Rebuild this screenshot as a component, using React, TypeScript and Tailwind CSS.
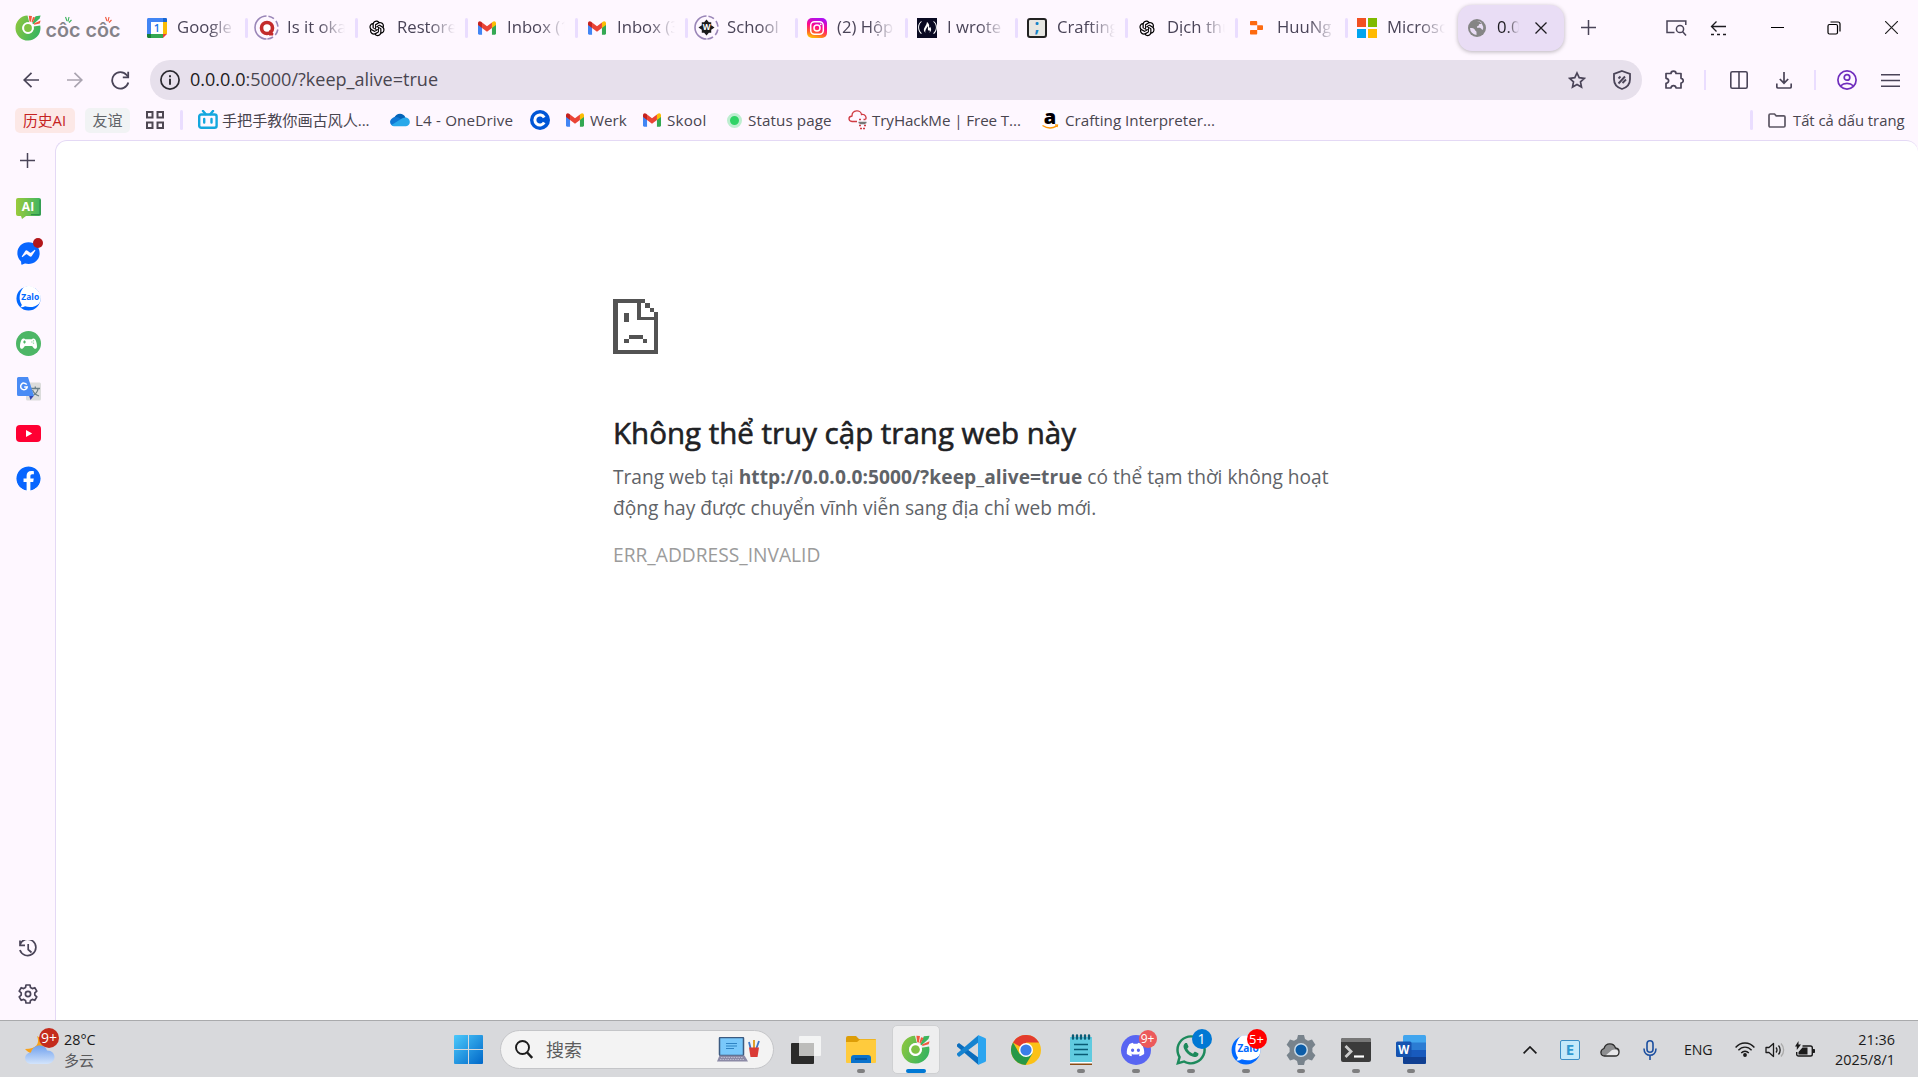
import React from "react";
import { AiOutlineOpenAI } from "react-icons/ai";
import { FaDiscord, FaWhatsapp, FaFacebook, FaFacebookMessenger, FaFreeCodeCamp } from "react-icons/fa";

function CocCocMark({ className }: { className: string }) {
  return (
    <svg viewBox="0 0 26 26" className={className}>
      <defs>
        <linearGradient id="ccg" x1="0" y1="0" x2="1" y2="0.4">
          <stop offset="0" stopColor="#94c83d" />
          <stop offset="1" stopColor="#3bb55d" />
        </linearGradient>
      </defs>
      <path d="M12.500.600A12.500 12.500 0 1 0 25.500 13c0-.9-.1-1.800-.3-2.600L18.500 11.500a5.700 5.700 0 1 1-4.200-4Z" fill="url(#ccg)" />
      <circle cx="13" cy="13" r="5.800" fill="#fff" />
      <circle cx="13" cy="13" r="3.900" fill="#7fc244" />
      <path d="M20.500 1.200 25.600.600 24.600 3.500 18.400 9.200 17.300 8.200Z" fill="#3bb55d" />
      <path d="M13.800.700l3.200.200-1 5.900-1.500-.2ZM18 2l2.300.6-2.800 5-1-.6ZM25.600 5.500l-.8 2.900-5.600 1.400-.4-1.200Z" fill="#f0593e" />
    </svg>
  );
}

function Gmail({ className }: { className: string }) {
  return (
    <svg viewBox="0 0 24 18" className={className}>
      <path d="M0 3v13.400C0 17.300.700 18 1.600 18h3.800V7Z" fill="#4285f4" />
      <path d="M24 3v13.400c0 .9-.7 1.600-1.600 1.600h-3.800V7Z" fill="#34a853" />
      <path d="M5.400 1.700v7.200L12 14l6.600-5.100V1.700L12 6.700Z" fill="#ea4335" />
      <path d="M18.600 1.700V8.900L24 4.900V2.600C24 .1 21.400-.800 19.700.800Z" fill="#fbbc04" />
      <path d="M0 2.600v2.300l5.400 4V1.700L4.300.800C2.600-.800 0 .1 0 2.600Z" fill="#c5221f" />
    </svg>
  );
}

function GCalendar() {
  return (
    <svg viewBox="0 0 20 20" className="size-5">
      <path d="M0 1.500C0 .6.600 0 1.500 0H18.500C19.400 0 20 .600 20 1.500V4H0Z" fill="#4285f4" />
      <path d="M0 4h4v12H0Z" fill="#4285f4" />
      <path d="M16 4h4v12h-4Z" fill="#fbbc04" />
      <path d="M16 0h2.500c.9 0 1.500.6 1.500 1.500V4h-4Z" fill="#1967d2" />
      <path d="M0 16h4v4H1.500C.6 20 0 19.400 0 18.500Z" fill="#188038" />
      <path d="M4 16h12v4H4Z" fill="#34a853" />
      <path d="M16 16h4l-4 4Z" fill="#ea4335" />
      <path d="M4 4h12v12H4Z" fill="#fff" />
      <text x="10" y="14" textAnchor="middle" fontSize="11" fontWeight="600" fontFamily="Open Sans" fill="#1a73e8">1</text>
    </svg>
  );
}

function Ringed({ children }: { children: React.ReactNode }) {
  return (
    <span className="relative -ml-[3px] -mr-0.5 flex size-[25px] shrink-0 items-center justify-center">
      <svg viewBox="0 0 25 25" className="absolute inset-0 size-[25px]" fill="none" stroke="#9a86b8" strokeWidth="1.600">
        <path d="M12.500 1A11.500 11.500 0 1 0 12.500 24" />
        <path d="M12.500 1A11.500 11.500 0 0 1 12.500 24" strokeDasharray="6 3" strokeDashoffset="-2" />
      </svg>
      {children}
    </span>
  );
}

function Instagram() {
  return (
    <svg viewBox="0 0 20 20" className="size-5">
      <defs>
        <linearGradient id="ig" x1="0.200" y1="1" x2="0.500" y2="0">
          <stop offset="0" stopColor="#ffc800" />
          <stop offset=".3" stopColor="#ff5a30" />
          <stop offset=".6" stopColor="#ff0a8a" />
          <stop offset="1" stopColor="#b010f0" />
        </linearGradient>
      </defs>
      <rect width="20" height="20" rx="5" fill="url(#ig)" />
      <g fill="none" stroke="#fff" strokeWidth="1.500">
        <rect x="3.700" y="3.700" width="12.600" height="12.600" rx="3.800" />
        <circle cx="10" cy="10" r="3" />
      </g>
      <circle cx="13.700" cy="6.300" r=".9" fill="#fff" />
    </svg>
  );
}

function MsLogo() {
  return (
    <span className="grid size-5 grid-cols-2 gap-[2px]">
      <i className="bg-[#f25022]" />
      <i className="bg-[#7fba00]" />
      <i className="bg-[#00a4ef]" />
      <i className="bg-[#ffb900]" />
    </span>
  );
}

function ZaloMark({ className }: { className: string }) {
  return (
    <svg viewBox="0 0 26 26" className={className}>
      <circle cx="13" cy="13" r="12.500" fill="#0068ff" />
      <path d="M8 1.200C3 7 2.500 14.500 6 19.500c-.2 1.300-.8 2-1.600 2.600 2 .3 3.600-.2 5-1 4.600 1.600 10.600 1.200 15-3.200A12.500 12.500 0 0 0 8 1.200Z" fill="#fff" />
      <text x="14.800" y="14.800" textAnchor="middle" fontSize="8.800" fontWeight="700" fontFamily="Open Sans" fill="#0068ff">Zalo</text>
    </svg>
  );
}

const openai = <AiOutlineOpenAI className="size-5 text-black" />;

const tabs: { icon: React.ReactNode; title: string }[] = [
  { icon: <GCalendar />, title: "Google" },
  {
    icon: (
      <Ringed>
        <svg viewBox="0 0 16 16" className="size-4">
          <circle cx="8" cy="8" r="5.500" fill="#fff" stroke="#c32b2b" strokeWidth="3.600" />
          <path d="M10 10l4.500 3.500-.5 2H10Z" fill="#c32b2b" />
        </svg>
      </Ringed>
    ),
    title: "Is it okay",
  },
  { icon: openai, title: "Restore" },
  { icon: <Gmail className="mx-px h-[14px] w-[18px]" />, title: "Inbox (1" },
  { icon: <Gmail className="mx-px h-[14px] w-[18px]" />, title: "Inbox (3" },
  {
    icon: (
      <Ringed>
        <svg viewBox="0 0 18 18" className="size-[17px]">
          <path d="M9 .5l2.500 3h2.500v3L17.500 9 14 11.500V14.500h-2.500L9 17.500 6.500 14.500H4v-3L.5 9 4 6.500V3.500h2.500Z" fill="#1b1b1b" />
          <text x="9" y="12" textAnchor="middle" fontSize="8.500" fontWeight="700" fontFamily="Open Sans" fill="#fff">W</text>
        </svg>
      </Ringed>
    ),
    title: "School",
  },
  { icon: <Instagram />, title: "(2) Hộp" },
  {
    icon: (
      <span className="flex size-5 items-center justify-center bg-[#0a0a23]">
        <FaFreeCodeCamp className="size-[19px] text-white" />
      </span>
    ),
    title: "I wrote",
  },
  {
    icon: (
      <span className="flex size-5 items-center justify-center rounded-[3px] border-2 border-[#222] bg-[#e6e6e2] text-[17px] leading-none font-bold text-[#1583c8]">
        <span className="-mt-1">;</span>
      </span>
    ),
    title: "Crafting",
  },
  { icon: openai, title: "Dịch thuật" },
  {
    icon: (
      <svg viewBox="0 0 20 20" className="size-5 text-[#fd6a10]" fill="currentColor">
        <path d="M4 3h5.200c.5 0 1 .4 1 1v3.300H4c-.6 0-1-.4-1-1V4c0-.6.400-1 1-1ZM10.200 7.300H15c.6 0 1 .4 1 1v2.600c0 .6-.4 1-1 1h-4.800ZM3 12.900c0-.6.400-1 1-1h6.200v3.600c0 .5-.4 1-1 1H4c-.6 0-1-.4-1-1Z" />
      </svg>
    ),
    title: "HuuNg",
  },
  { icon: <MsLogo />, title: "Microsoft" },
];

function Tab({ icon, title, last }: { icon: React.ReactNode; title: string; last: boolean }) {
  return (
    <div className="flex h-full w-[110px] items-center pl-[9px]">
      <span className="flex w-5 shrink-0 items-center justify-center">{icon}</span>
      <span className="mb-0.5 ml-[10px] w-[58px] shrink-0 overflow-hidden [mask-image:linear-gradient(to_right,#000_55%,transparent_100%)] text-[16.7px] leading-6 whitespace-nowrap text-[#4a4458]">
        {title}
      </span>
      <span className={last ? "hidden" : "ml-[10px] h-5 w-[3px] shrink-0 rounded-sm bg-[#eaddff]"} />
    </div>
  );
}

function TabStrip() {
  return (
    <div className="flex h-[55px] items-center">
      <div className="ml-[15px] flex w-[123px] items-center">
        <CocCocMark className="size-[26px]" />
        <svg viewBox="0 0 76 26" className="ml-[4px] h-[26px] w-[76px]">
          <text x="0.500" y="21.500" textLength="35" lengthAdjust="spacingAndGlyphs" fontSize="19.500" fontWeight="600" fontFamily="Inter" fill="#858289">côc</text>
          <text x="40.500" y="21.500" textLength="35" lengthAdjust="spacingAndGlyphs" fontSize="19.500" fontWeight="600" fontFamily="Inter" fill="#858289">côc</text>
          <path d="M20.500 2l1.500 4M24 2l-1 4.500M26.500 5l-2.500 2.500" stroke="#3bb55d" strokeWidth="1.100" />
          <path d="M60.500 2l1.500 4M64 2l-1 4.500M66.500 5l-2.500 2.500" stroke="#f0593e" strokeWidth="1.100" />
        </svg>
      </div>
      {tabs.map((t, i) => (
        <Tab key={i} icon={t.icon} title={t.title} last={i === tabs.length - 1} />
      ))}
      <div className="flex h-[46px] w-[106px] items-center rounded-[14px] bg-[#e9ddf5] pl-[10px] shadow-[0_1px_4px_rgba(0,0,0,0.28)]">
        <svg viewBox="0 0 18 18" className="size-[18px]">
          <circle cx="9" cy="9" r="9" fill="#858585" />
          <path d="M2 9c2 0 4.500.3 5 2 .3 1.200 1.500.8 1.500 2.200V16A7 7 0 0 1 2 9ZM9 2c2 0 3.600.8 4.500 1.800-.4 1.200-1.500 1.400-2.500 1.400 0 1.500-1 2-2 2v1.500h3c1.200.3 1.200 2 3 2A7 7 0 0 0 9 2Z" fill="#e9ddf5" />
        </svg>
        <span className="mb-0.5 ml-[11px] w-[22px] overflow-hidden [mask-image:linear-gradient(to_right,#000_45%,transparent_100%)] text-[16.7px] leading-6 whitespace-nowrap text-[#1d1b20]">0.0.0.0</span>
        <svg viewBox="0 0 12 12" className="ml-[16px] size-3" stroke="#1d1b20" strokeWidth="1.300">
          <path d="M.5.500l11 11M11.500.500l-11 11" />
        </svg>
      </div>
      <svg viewBox="0 0 15 15" className="ml-[17px] size-[15px]" stroke="#4a4458" strokeWidth="1.500">
        <path d="M7.500 0v15M0 7.500h15" />
      </svg>
      <div className="mr-5 ml-auto flex items-center text-[#1d1b20]">
        <svg viewBox="0 0 21 16" className="h-4 w-[21px]" fill="none" stroke="#4a4458" strokeWidth="1.500">
          <path d="M8.500 12.500H1V1h18.800v4" />
          <circle cx="14" cy="9" r="3.600" />
          <path d="M16.500 11.500l3.500 4" />
        </svg>
        <svg viewBox="0 0 17 16" className="ml-[23px] h-4 w-[17px]" fill="none" stroke="#1d1b20" strokeWidth="1.300">
          <path d="M16 6.500H1.500M6.500 1.500l-5 5 5 5" />
          <path d="M1 14.500h16" strokeDasharray="3 3" />
        </svg>
        <span className="ml-[44px] h-px w-[13px] bg-black" />
        <svg viewBox="0 0 14 14" className="ml-[43px] size-[14px]" fill="none" stroke="#000" strokeWidth="1.200">
          <rect x="1" y="3.500" width="9.500" height="9.500" rx="1.500" />
          <path d="M3.500 1h7.500a2 2 0 0 1 2 2v7.500" />
        </svg>
        <svg viewBox="0 0 13 13" className="ml-[44px] size-[13px]" stroke="#222" strokeWidth="1.200">
          <path d="M0 0l13 13M13 0L0 13" />
        </svg>
      </div>
    </div>
  );
}

function Toolbar() {
  return (
    <div className="mt-[5px] flex h-10 items-center">
      <svg viewBox="0 0 16 16" className="ml-[23px] size-4" fill="none" stroke="#4a4458" strokeWidth="1.700">
        <path d="M16 8H1.200M8.500.800L1.200 8l7.300 7.200" />
      </svg>
      <svg viewBox="0 0 16 16" className="ml-[28px] size-4" fill="none" stroke="#aaa4b0" strokeWidth="1.700">
        <path d="M0 8h14.800M7.500.800L14.800 8l-7.300 7.200" />
      </svg>
      <svg viewBox="0 0 19 19" className="ml-[28px] size-[19px]" fill="none" stroke="#4a4458" strokeWidth="1.800">
        <path d="M17.300 11.500A8.200 8.200 0 1 1 15.600 4l1.200 1.500" />
        <path d="M17.200.800v5.600h-5.400" />
      </svg>
      <div className="ml-[20px] flex h-10 w-[1492px] items-center rounded-full bg-[#e7e0ec]">
        <svg viewBox="0 0 20 20" className="ml-[10px] size-5" fill="none" stroke="#2b2930" strokeWidth="1.700">
          <circle cx="10" cy="10" r="9.100" />
          <path d="M10 8.800v6M10 5.200v2" strokeWidth="1.900" />
        </svg>
        <span className="mb-0.5 ml-[10px] text-[18.050px] leading-6 text-[#49454f]">
          <span className="text-[#1d1b20]">0.0.0.0</span>:5000/?keep_alive=true
        </span>
        <svg viewBox="0 0 18 18" className="ml-auto size-[18px]" fill="none" stroke="#4a4458" strokeWidth="1.700">
          <path d="M9 2l2.200 4.700 5.100.6-3.800 3.500 1 5.200L9 13.400 4.500 16l1-5.200L1.700 7.300l5.100-.6Z" />
        </svg>
        <svg viewBox="0 0 18 20" className="mr-[11px] ml-[27px] h-5 w-[18px]" fill="none" stroke="#4a4458" strokeWidth="1.800">
          <path d="M9 1l8 2.800v5.400c0 4.800-3 8.200-8 9.800-5-1.600-8-5-8-9.800V3.800Z" />
          <path d="M5.500 13.500 12 6.500M5.500 8.500 7.500 6.500M9.500 13l3.500-3.500" strokeWidth="1.900" />
        </svg>
      </div>
      <svg viewBox="0 0 20 20" className="ml-[22px] size-5" fill="none" stroke="#4a4458" strokeWidth="1.700" strokeLinejoin="round">
        <path d="M2 3.500h5c0-3.300 5-3.300 5 0h5v4.800c3 .3 3 4.400 0 4.700V18h-5c-.3-3.300-4.700-3.300-5 0H2v-4.700c3.500-.3 3.500-4.700 0-5Z" />
      </svg>
      <span className="ml-[20px] h-5 w-0.5 bg-[#eaddff]" />
      <svg viewBox="0 0 18 18" className="ml-[24px] size-[18px]" fill="none" stroke="#4a4458" strokeWidth="1.600">
        <rect x=".8" y=".8" width="16.400" height="16.400" rx="1.500" />
        <path d="M9 1v16" />
      </svg>
      <svg viewBox="0 0 16 17" className="ml-[28px] h-[17px] w-4" fill="none" stroke="#4a4458" strokeWidth="1.700">
        <path d="M8 0v11M3.800 7L8 11.200 12.200 7M.8 11.500v3.200c0 .8.500 1.300 1.300 1.300h11.800c.8 0 1.300-.5 1.300-1.300v-3.200" />
      </svg>
      <span className="ml-[22px] h-5 w-0.5 bg-[#eaddff]" />
      <svg viewBox="0 0 20 20" className="ml-[21px] size-5" fill="none" stroke="#6f2dbd" strokeWidth="1.700">
        <circle cx="10" cy="10" r="9.100" />
        <circle cx="10" cy="7.400" r="2.800" />
        <path d="M3.500 16c3.500-3.400 9.500-3.400 13 0" />
      </svg>
      <svg viewBox="0 0 19 13" className="ml-[24px] h-[13px] w-[19px]" stroke="#4a4458" strokeWidth="1.500">
        <path d="M0 .8h19M0 6.500h19M0 12.200h19" />
      </svg>
    </div>
  );
}

function Bookmark({ icon, label, className }: { icon: React.ReactNode; label: string; className: string }) {
  return (
    <div className={`flex shrink-0 items-center whitespace-nowrap ${className}`}>
      {icon}
      <span>{label}</span>
    </div>
  );
}

function Bookmarks() {
  return (
    <div className="flex h-10 items-center text-[15.2px] leading-6 text-[#49454f]">
      <span className="ml-[15px] flex h-[25px] w-[60px] items-center justify-center rounded-[5px] bg-[#fce8e6] pr-px text-[14.800px] text-[#c5221f]">历史AI</span>
      <span className="ml-[10px] flex h-[25px] w-[45px] items-center justify-center rounded-[5px] bg-[#f1f3f4] text-[15px] text-[#5f6368]">友谊</span>
      <svg viewBox="0 0 18 18" className="ml-[16px] size-[18px]" fill="none" stroke="#4e4852" strokeWidth="2">
        <path d="M1 1h5.500v5.500H1ZM11.500 1H17v5.500h-5.500ZM1 11.500h5.500V17H1ZM11.500 11.500H17V17h-5.500Z" />
      </svg>
      <span className="ml-[16px] h-5 w-[3px] rounded-sm bg-[#eaddff]" />
      <Bookmark
        className="ml-[15px] w-[192px] gap-[4px] tracking-[-0.1px]"
        label="手把手教你画古风人..."
        icon={
          <svg viewBox="0 0 20 20" className="size-5 shrink-0" fill="none" stroke="#14a7de" strokeWidth="2.400">
            <rect x="1.200" y="4.500" width="17.400" height="13.300" rx="2" />
            <path d="M5 1l2.500 3M15 1l-2.500 3M6.200 9v3.500M13.500 9v3.500" strokeLinecap="round" />
          </svg>
        }
      />
      <Bookmark
        className="w-[140px] gap-[5px] tracking-[0.15px]"
        label="L4 - OneDrive"
        icon={
          <svg viewBox="0 0 20 14" className="h-[14px] w-5 shrink-0">
            <path d="M4 5.500C5.500 0 13 -1 15.500 4.500L12 9 3 7Z" fill="#0364b8" />
            <path d="M2 5.500C5 3 8 4 11 6l-6 7H4.500C0 13-1.500 8 2 5.500Z" fill="#0f78d4" />
            <path d="M11 6c2-1.600 4-2 6-1.200 4 1.400 3.800 8.200-1 8.500H4.500C3.200 13.300 2 12.600 1.500 12Z" fill="#28a8ea" />
          </svg>
        }
      />
      <Bookmark
        className="w-[36px]"
        label=""
        icon={
          <svg viewBox="0 0 20 20" className="size-5">
            <circle cx="10" cy="10" r="10" fill="#0056d6" />
            <path d="M14.200 12.500a5 5 0 1 1 0-5" fill="none" stroke="#fff" strokeWidth="3" />
          </svg>
        }
      />
      <Bookmark className="w-[77px] gap-[6px]" label="Werk" icon={<Gmail className="h-[14px] w-[18px] shrink-0" />} />
      <Bookmark className="w-[84px] gap-[6px] tracking-[0.2px]" label="Skool" icon={<Gmail className="h-[14px] w-[18px] shrink-0" />} />
      <Bookmark
        className="w-[121px] gap-[6px] tracking-[0.1px]"
        label="Status page"
        icon={<span className="size-[15px] shrink-0 rounded-full border-[3px] border-[#bdeed0] bg-[#2fd366]" />}
      />
      <Bookmark
        className="w-[192px] gap-[4px] tracking-[-0.1px]"
        label="TryHackMe | Free T..."
        icon={
          <svg viewBox="0 0 20 20" className="size-5 shrink-0" fill="none" stroke="#cf3b43" strokeWidth="1.300">
            <path d="M9 11.500H4C0 11 0 6.500 4 6 4-.500 13-.500 13.500 4.500c4-.500 5.500 3 4 5" />
            <path d="M11 9.500h3M15.500 9.500h3M11 15.500h3M16 15.500h2M12 18.500h6" strokeDasharray="2 1" />
            <path d="M10.500 12.500h8M11.500 13.500h6" stroke="#777" />
          </svg>
        }
      />
      <Bookmark
        className="w-[190px] gap-[5px]"
        label="Crafting Interpreter..."
        icon={
          <svg viewBox="0 0 20 20" className="size-5 shrink-0">
            <rect width="20" height="20" rx="2" fill="#fff" />
            <text x="10" y="14" textAnchor="middle" fontSize="20" fontWeight="800" fontFamily="Open Sans" fill="#000">a</text>
            <path d="M2.500 15.500c4.500 3 10 3 14 .6M15 14.800l2.500.200-.5 2" fill="none" stroke="#f90" strokeWidth="1.300" />
          </svg>
        }
      />
      <span className="ml-auto h-5 w-[3px] rounded-sm bg-[#eaddff]" />
      <svg viewBox="0 0 18 15" className="ml-[15px] h-[15px] w-[18px]" fill="none" stroke="#5c5664" strokeWidth="1.700">
        <path d="M1 2.200C1 1.400 1.500 1 2.200 1h4.300l1.700 1.800h7.600c.7 0 1.200.5 1.200 1.200v8.800c0 .7-.5 1.200-1.200 1.200H2.200c-.7 0-1.200-.5-1.200-1.200Z" />
      </svg>
      <span className="mr-[13px] ml-[7px] w-[112px] text-[14.800px] whitespace-nowrap">Tất cả dấu trang</span>
    </div>
  );
}

function Slot({ children }: { children: React.ReactNode }) {
  return <div className="relative flex h-[45px] w-[57px] items-center justify-center">{children}</div>;
}

function Gear({ className }: { className: string }) {
  return (
    <svg viewBox="0 0 20 20" className={className} fill="none" stroke="#4a4458" strokeWidth="1.700" strokeLinejoin="round">
      <path d="M8 1h4l.5 2.600 1.800 1 2.500-.900 2 3.400-2 1.800v2.200l2 1.800-2 3.400-2.500-.900-1.800 1L12 19H8l-.5-2.600-1.800-1-2.500.900-2-3.400 2-1.800V8.900l-2-1.800 2-3.400 2.500.900 1.800-1Z" />
      <circle cx="10" cy="10" r="2.600" />
    </svg>
  );
}

function Sidebar() {
  return (
    <div className="flex w-[55px] shrink-0 flex-col">
      <div className="flex h-[46px] w-[55px] items-center justify-center pb-[5px]">
        <svg viewBox="0 0 15 15" className="size-[15px]" stroke="#4a4458" strokeWidth="1.500">
          <path d="M7.500 0v15M0 7.500h15" />
        </svg>
      </div>
      <Slot>
        <svg viewBox="0 0 25 21" className="h-[21px] w-[25px]">
          <defs>
            <linearGradient id="aig">
              <stop offset="0" stopColor="#9aca3c" />
              <stop offset="1" stopColor="#3fb562" />
            </linearGradient>
          </defs>
          <path d="M2 0h21a2 2 0 0 1 2 2v14a2 2 0 0 1-2 2H10l-4 3-1-3H2a2 2 0 0 1-2-2V2a2 2 0 0 1 2-2Z" fill="url(#aig)" />
          <path d="M24 1.500v15.200H15" fill="none" stroke="#2f8f4a" strokeWidth="1.200" />
          <text x="12" y="13.200" textAnchor="middle" fontSize="12" fontWeight="700" fontFamily="Open Sans" fill="#fff">AI</text>
        </svg>
      </Slot>
      <Slot>
        <FaFacebookMessenger className="size-[23px] text-[#0866ff]" />
        <span className="absolute top-[7px] right-[14px] size-[10px] rounded-full bg-[#b3171b]" />
      </Slot>
      <Slot>
        <ZaloMark className="size-[25px]" />
      </Slot>
      <Slot>
        <svg viewBox="0 0 25 25" className="size-[25px]">
          <circle cx="12.500" cy="12.500" r="12.500" fill="#4db666" />
          <path d="M7.500 7.500c1.200 0 1.500.8 2 .8h6c.5 0 .8-.8 2-.8 2.500 0 3.500 5 3.500 8 0 2-1.200 2.500-2.400 2.200-1.500-.4-1.600-2.700-3.100-2.700h-6c-1.500 0-1.600 2.300-3.100 2.700C5.200 18 4 17.500 4 15.500c0-3 1-8 3.500-8Z" fill="#fff" />
          <path d="M8.500 9.500v3M7 11h3M15.500 11h.8M17.500 9.500v.8M17.500 11.800v.8" stroke="#4db666" strokeWidth="1.200" />
        </svg>
      </Slot>
      <Slot>
        <svg viewBox="0 0 24 24" className="size-6">
          <rect x="9" y="5.500" width="15" height="18" rx="1.500" fill="#dcdcdc" />
          <path d="M14 11.500h9M18.300 9.500v2M21 12c-.5 3-3 5.500-6 7M15.500 13c1 2.500 3.500 5 6.500 6" stroke="#6b7f86" strokeWidth="1.300" fill="none" />
          <path d="M12 18.500h5L13.500 23Z" fill="#3747b0" />
          <path d="M1.500 0H11l6 19H1.500A1.500 1.500 0 0 1 0 17.500v-16A1.500 1.500 0 0 1 1.500 0Z" fill="#4a8cf5" />
          <path d="M9.700 7.600A3.300 3.300 0 1 0 10.200 10H7.200" fill="none" stroke="#fff" strokeWidth="1.500" />
        </svg>
      </Slot>
      <Slot>
        <svg viewBox="0 0 25 17" className="h-[17px] w-[25px]">
          <rect width="25" height="17" rx="4" fill="#ff0033" />
          <path d="M10 5v7l6.200-3.500Z" fill="#fff" />
        </svg>
      </Slot>
      <Slot>
        <FaFacebook className="size-[25px] rounded-full bg-white text-[#0866ff]" />
      </Slot>
      <div className="mt-auto mb-[4px] flex w-[56px] flex-col">
        <div className="flex h-[45px] w-[56px] items-center justify-center pt-px">
          <svg viewBox="0 0 18 18" className="size-[18px]" fill="none" stroke="#4a4458" strokeWidth="1.700">
            <path d="M1 4.500A8.200 8.200 0 1 1 .9 10M1 .500v4.800h5M9.200 4v5.500l3.300 3" />
          </svg>
        </div>
        <div className="flex h-[45px] w-[56px] items-center justify-center">
          <Gear className="size-5" />
        </div>
      </div>
    </div>
  );
}

function ErrorPage() {
  return (
    <main className="min-w-0 flex-1 overflow-hidden rounded-t-[12px] border-t border-l border-[#e4d9f5] bg-white">
      <div className="mt-[158px] ml-[557px] w-[735px]">
        <svg viewBox="0 0 45 55" className="h-[55px] w-[45px]" shapeRendering="crispEdges" fill="#535353">
          <path d="M0 0h32v4H4.500v46.500h36.500V21H23.500V4h4v13.500h13V13h4.500v42H0ZM32 4h4.500v4.500H32ZM36.500 8.500h4.500V13h-4.500ZM11 13.500h5v9h-5ZM15.500 35.500h14v4.500h-14ZM11 40h4.500v4H11ZM29.500 40H34v4h-4.500Z" />
        </svg>
        <h1 className="mt-[59px] text-[29.500px] leading-10 whitespace-nowrap text-[#202124] [-webkit-text-stroke:0.6px_#202124]">Không thể truy cập trang web này</h1>
        <p className="mt-[9px] text-[19.150px] leading-[31px] whitespace-nowrap text-[#5f6368]">
          Trang web tại <b className="font-bold tracking-[0.08px]">http://0.0.0.0:5000/?keep_alive=true</b> có thể tạm thời không hoạt
          <br />
          động hay được chuyển vĩnh viễn sang địa chỉ web mới.
        </p>
        <div className="mt-[15px] text-[19.200px] leading-[31px] text-[#9b9b9b]">ERR_ADDRESS_INVALID</div>
      </div>
    </main>
  );
}

function AppButton({ children, dot = true, active = false }: { children: React.ReactNode; dot?: boolean; active?: boolean }) {
  return (
    <div className="flex h-full w-[55px] items-center justify-center">
      <div className={`relative flex h-[49px] w-[48px] items-center justify-center rounded-[5px] ${active ? "border border-[#cfd0d2] bg-[#eeeeef]" : ""}`}>
        {children}
        {dot && <span className={active ? "absolute bottom-0 h-1 w-5 rounded-full bg-[#0078d4]" : "absolute bottom-px h-1 w-2 rounded-full bg-[#7f7f80]"} />}
      </div>
    </div>
  );
}

function TaskbarApps() {
  return (
    <>
      <AppButton dot={false}>
        <svg viewBox="0 0 30 28" className="h-7 w-[30px]">
          <rect x="0" y="7" width="23" height="21" rx="1" fill="#2b2b2a" />
          <rect x="8" y="0" width="22" height="20" rx="1" fill="#f8f8f8" opacity=".85" />
          <rect x="8" y="7" width="15" height="13" fill="#bdbdbb" />
        </svg>
      </AppButton>
      <AppButton>
        <svg viewBox="0 0 30 27" className="h-[27px] w-[30px]">
          <path d="M0 2a2 2 0 0 1 2-2h8l3 3h16a1 1 0 0 1 1 1v6H0Z" fill="#dd9d07" />
          <path d="M0 6h11l3-2.500h16V26a1 1 0 0 1-1 1H1a1 1 0 0 1-1-1Z" fill="#ffcb3d" />
          <path d="M5 27v-5a3 3 0 0 1 3-3h14a3 3 0 0 1 3 3v5Z" fill="#0a72cc" />
          <path d="M9 23h12" stroke="#054d94" strokeWidth="1.500" />
        </svg>
      </AppButton>
      <AppButton active>
        <CocCocMark className="size-[29px]" />
      </AppButton>
      <AppButton dot={false}>
        <svg viewBox="0 0 30 30" className="size-[30px]">
          <path d="M1 9.500l2-1.500 20 15-1 6.500L1 11.500Z" fill="#0a6dbd" />
          <path d="M1 20l2 2L23 7 22 .500 1 18.500Z" fill="#1583d0" />
          <path d="M22 0l7 3a1.500 1.500 0 0 1 1 1.500v21a1.500 1.500 0 0 1-1 1.500l-7 3Z" fill="#2ba5f0" />
          <path d="M22 8.500v13L13 15Z" fill="#d9dadd" />
        </svg>
      </AppButton>
      <AppButton dot={false}>
        <svg viewBox="0 0 30 30" className="size-[30px]">
          <circle cx="15" cy="15" r="15" fill="#fbc116" />
          <path d="M15 15 2 7.500A15 15 0 0 1 28 7.500H15Z" fill="#e33b2e" />
          <path d="M2 7.500A15 15 0 0 0 14.500 30L21.500 18.500 8.500 18.700Z" fill="#279847" />
          <circle cx="15" cy="15" r="7" fill="#fff" />
          <circle cx="15" cy="15" r="5.600" fill="#3a7ee8" />
        </svg>
      </AppButton>
      <AppButton>
        <svg viewBox="0 0 24 32" className="h-8 w-6">
          <path d="M1 27h22v4H1Z" fill="#8a4b14" />
          <path d="M1 3h22v25H1Z" fill="#60cbe0" />
          <path d="M1 28h22v1.500H1Z" fill="#fff" />
          <path d="M5 10.500h14M5 15.500h14M5 20.500h14" stroke="#085a73" strokeWidth="1.600" />
          <path d="M4 1.500v3M8 1.500v3M12 1.500v3M16 1.500v3M20 1.500v3" stroke="#0b5c76" strokeWidth="2.400" strokeLinecap="round" />
        </svg>
      </AppButton>
      <AppButton>
        <span className="flex size-[30px] items-center justify-center rounded-full bg-[#5865f2]">
          <FaDiscord className="size-[19px] text-white" />
        </span>
        <span className="absolute top-[5px] right-[3px] flex size-[18px] items-center justify-center rounded-full bg-[#ec5a5b] text-[12px] leading-none text-white">9+</span>
      </AppButton>
      <AppButton>
        <FaWhatsapp className="size-[34px] text-[#1d8a5c]" />
        <span className="absolute top-[4px] right-[3px] flex size-5 items-center justify-center rounded-full bg-[#0078d4] text-[14px] leading-none text-white">1</span>
      </AppButton>
      <AppButton>
        <ZaloMark className="size-[30px]" />
        <span className="absolute top-[4px] right-[3px] flex size-5 items-center justify-center rounded-full bg-[#ff0000] text-[13px] leading-none text-white">5+</span>
      </AppButton>
      <AppButton>
        <svg viewBox="0 0 30 30" className="size-[30px]">
          <path d="M12 0h6l1 4 3 1.700 4-1.300 3.400 5.300-3 3.300v4l3 3.300-3.400 5.300-4-1.300-3 1.700-1 4h-6l-1-4-3-1.700-4 1.300L.6 20.300l3-3.300v-4l-3-3.300L4 4.400l4 1.300L11 4Z" fill="#78838c" />
          <circle cx="15" cy="15" r="7" fill="#c9dbe9" />
          <circle cx="15" cy="15" r="5.500" fill="#0c5da8" />
        </svg>
      </AppButton>
      <AppButton>
        <svg viewBox="0 0 30 24" className="h-6 w-[30px]">
          <rect width="30" height="24" rx="2" fill="#3b3b3b" />
          <path d="M0 4V2a2 2 0 0 1 2-2h26a2 2 0 0 1 2 2v2Z" fill="#777" />
          <path d="M4.500 8l5.500 5.500L4.500 19" fill="none" stroke="#ccc" strokeWidth="2.800" />
          <path d="M13 18.500h10" stroke="#fff" strokeWidth="2.200" />
        </svg>
      </AppButton>
      <AppButton>
        <svg viewBox="0 0 30 29" className="h-[29px] w-[30px]">
          <rect x="7" width="23" height="29" rx="1.500" fill="#41a5ee" />
          <path d="M7 7.500h23V15H7Z" fill="#2b7cd3" />
          <path d="M7 15h23v7H7Z" fill="#185abd" />
          <path d="M7 22h23v5.500a1.500 1.500 0 0 1-1.500 1.500h-20A1.500 1.500 0 0 1 7 27.500Z" fill="#103f91" />
          <rect y="6.500" width="15.500" height="15.500" rx="1.500" fill="#1553b0" />
          <text x="7.700" y="18.500" textAnchor="middle" fontSize="11.500" fontWeight="700" fontFamily="Open Sans" fill="#fff">W</text>
        </svg>
      </AppButton>
    </>
  );
}

function Taskbar() {
  return (
    <div className="flex h-[57px] items-center border-t border-[#a9aaac] bg-[#d8d9dc] pt-px text-[#1b1b1b]">
      <div className="relative ml-[24px] h-[30px] w-[32px]">
        <svg viewBox="0 0 32 30" className="h-[30px] w-8">
          <defs>
            <linearGradient id="cloud" x1="0" y1="0" x2="0" y2="1">
              <stop offset="0" stopColor="#6fa0ee" />
              <stop offset="1" stopColor="#d3e4fb" />
            </linearGradient>
          </defs>
          <path d="M13 1c3 7 0 13-12 13 4 5 10 6 15 3s6-12-3-16Z" fill="#f6a11e" />
          <path d="M8 29c-9 0-9-11-1-11.500C9 8.500 21 8.500 23 15.500c10 0 10 13 0 13.500Z" fill="url(#cloud)" />
        </svg>
        <span className="absolute -top-[7px] -right-[3px] flex size-5 items-center justify-center rounded-full bg-[#c42b1c] text-[14px] leading-none text-white">9+</span>
      </div>
      <div className="ml-[8px] w-[60px] text-[14.400px] leading-5">
        <div>28°C</div>
        <div className="text-[15px] text-[#5a5a5c]">多云</div>
      </div>
      <svg viewBox="0 0 29 29" className="ml-[330px] size-[29px]">
        <defs>
          <linearGradient id="win" x1="0" y1="0" x2="1" y2="1">
            <stop offset="0" stopColor="#4cc9fb" />
            <stop offset="1" stopColor="#0067c8" />
          </linearGradient>
        </defs>
        <path d="M1 0h13v14H0V1a1 1 0 0 1 1-1ZM15 0h13a1 1 0 0 1 1 1v13H15ZM0 15h14v14H1a1 1 0 0 1-1-1ZM15 15h14v13a1 1 0 0 1-1 1H15Z" fill="url(#win)" />
      </svg>
      <div className="ml-[17px] flex h-[39px] w-[274px] items-center rounded-full border border-[#c4c5c8] bg-[#f3f3f3]">
        <svg viewBox="0 0 18 19" className="ml-[14px] h-[19px] w-[18px]" fill="none" stroke="#1b1b1b">
          <circle cx="7.500" cy="7.500" r="6.500" strokeWidth="1.900" />
          <path d="M12.200 12.500l5 5.500" strokeWidth="2.400" />
        </svg>
        <span className="ml-[13px] text-[18px] leading-6 text-[#5c5c5c]">搜索</span>
        <svg viewBox="0 0 43 25" className="mr-[13px] ml-auto h-[25px] w-[43px]">
          <rect x="2.500" y=".5" width="24" height="18" rx="1" fill="#79c8fb" stroke="#3b5a80" strokeWidth="1.500" />
          <path d="M9 6.500h11M9 9h11M9 11.500h8" stroke="#2f83c4" strokeWidth="1.200" />
          <path d="M2.500 18.500h25l3.500 6H0Z" fill="#8c8aa6" />
          <path d="M4 20.500h22M3 22.500h24" stroke="#c9c8d8" strokeWidth=".8" strokeDasharray="1.500 1" />
          <path d="M33.500 11L32 5M39.500 11L42 4" stroke="#3f74c4" strokeWidth="1.800" />
          <path d="M37 11V3" stroke="#e0a02a" strokeWidth="2" />
          <path d="M32 10.500h10L40.500 20h-7Z" fill="#da3b35" />
        </svg>
      </div>
      <div className="ml-[4px] flex h-full">
        <TaskbarApps />
      </div>
      <div className="mr-[23px] ml-auto flex items-center">
        <svg viewBox="0 0 14 8" className="h-2 w-[14px]" fill="none" stroke="#1b1b1b" strokeWidth="1.700">
          <path d="M.6 7.400L7 1l6.400 6.400" />
        </svg>
        <span className="ml-[23px] flex size-5 items-center justify-center rounded-[2px] border border-[#3c8dc4] bg-[#c5e9fa] text-[15px] leading-none font-bold text-[#2f98d0]">E</span>
        <svg viewBox="0 0 20 14" className="ml-[20px] h-[14px] w-5">
          <path d="M4.500 13C.2 13-.5 7 4 5.500 6-.5 13.500-.500 15.500 5c5 .5 4.500 8-.500 8Z" fill="#8d8e90" />
          <path d="M5 13l7-6c3-1.500 7 0 7 3s-2 3-4 3Z" fill="#e8e8ea" />
          <path d="M4.500 13C.2 13-.5 7 4 5.500 6-.5 13.500-.500 15.500 5c5 .5 4.500 8-.500 8Z" fill="none" stroke="#2b2b2b" strokeWidth="1.300" />
        </svg>
        <svg viewBox="0 0 14 20" className="ml-[23px] h-5 w-[14px]" fill="none" stroke="#1c4fa0" strokeWidth="1.600">
          <rect x="4" y=".8" width="6" height="11.500" rx="3" />
          <path d="M1 8.500c0 9 12 9 12 0M7 15.500V20" />
        </svg>
        <span className="ml-[27px] w-[28px] text-[14.200px] leading-5 tracking-[-0.2px]">ENG</span>
        <svg viewBox="0 0 20 15" className="ml-[23px] h-[15px] w-5" fill="none" stroke="#1b1b1b" strokeWidth="1.400">
          <path d="M.6 5.500c5-6 13.800-6 18.800 0M3.400 8.300c3.700-4.200 9.500-4.200 13.200 0M6.200 11c2.200-2.300 5.400-2.300 7.600 0" />
          <circle cx="10" cy="13" r="1.200" fill="#1b1b1b" />
        </svg>
        <svg viewBox="0 0 20 16" className="ml-[10px] h-4 w-5" fill="none" stroke="#1b1b1b" strokeWidth="1.300">
          <path d="M1 5.500h3L8.500 1.500v13L4 10.500H1Z" strokeLinejoin="round" />
          <path d="M11 5.500c1.200 1.500 1.200 3.500 0 5M13.500 3.500c2.200 2.500 2.200 6.500 0 9" />
          <path d="M16 1.500c3.500 3.800 3.500 9.200 0 13" stroke="#aaa" />
        </svg>
        <svg viewBox="0 0 20 17" className="ml-[10px] h-[17px] w-5">
          <path d="M7.500 5h8A1.800 1.800 0 0 1 17.300 6.800v6.400a1.800 1.800 0 0 1-1.800 1.800H3.500A1.800 1.800 0 0 1 1.700 13.200V11" fill="none" stroke="#1b1b1b" strokeWidth="1.400" />
          <path d="M7.500 6.500h5v7H3.500V11ZM18 8h1.200q.8 0 .8.800v2.400q0 .8-.8.800H18ZM3.500 0v3.500H6L1.800 9V5.500H0Z" fill="#1b1b1b" />
        </svg>
        <div className="ml-[10px] w-[70px] text-right text-[14.400px] leading-5">
          <div>21:36</div>
          <div>2025/8/1</div>
        </div>
      </div>
    </div>
  );
}

export default function App() {
  return (
    <div className="flex h-[1077px] w-[1918px] flex-col overflow-hidden bg-[#fef7ff] font-['Open_Sans','Noto_Sans_CJK_SC',sans-serif]">
      <TabStrip />
      <Toolbar />
      <Bookmarks />
      <div className="flex min-h-0 flex-1">
        <Sidebar />
        <ErrorPage />
      </div>
      <Taskbar />
    </div>
  );
}
